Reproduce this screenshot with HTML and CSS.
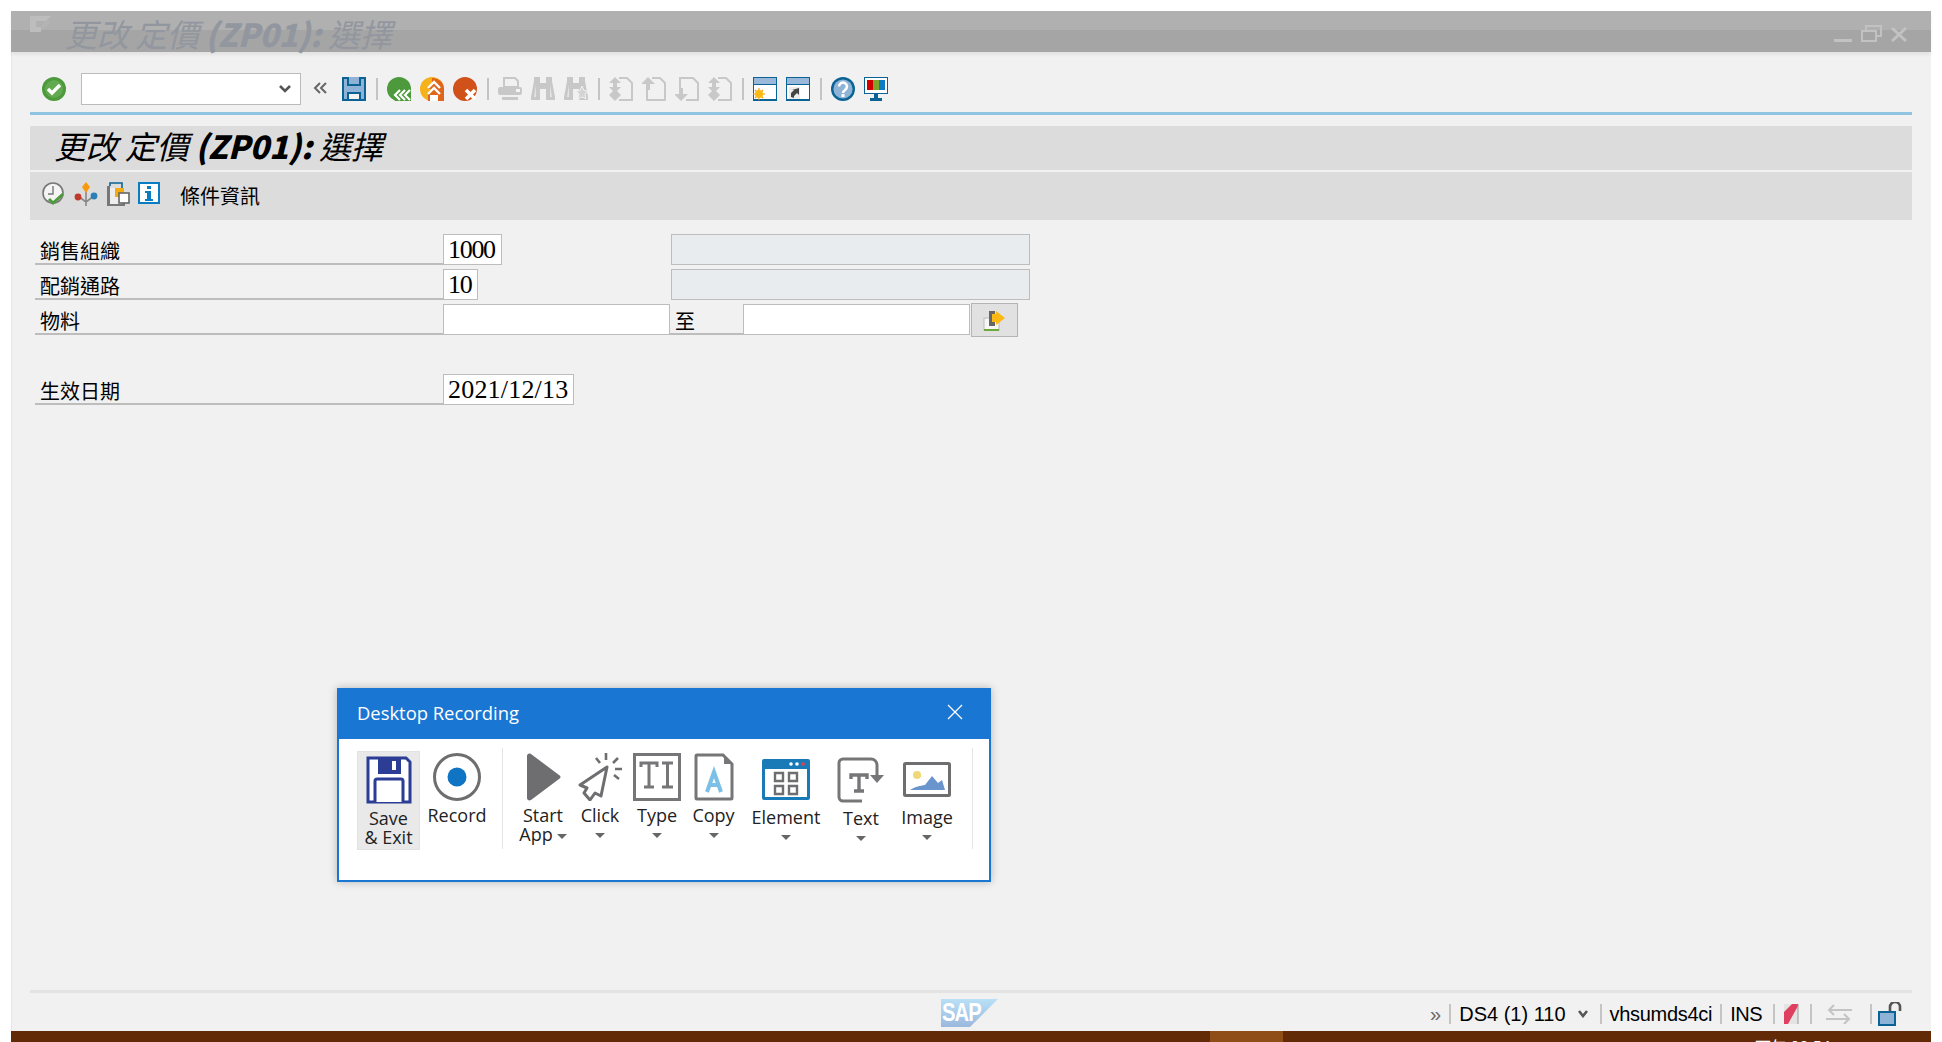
FILE: index.html
```html
<!DOCTYPE html>
<html>
<head>
  <title>更改 定價 (ZP01): 選擇</title>
  <link rel="stylesheet" href="styles.css">
</head>
<body>
  <div class="window">
    <div class="titlebar">
      <svg class="title-icon" width="22" height="16" viewBox="0 0 22 16"><path d="M0 0h21l-5 5H6v6h5v5H0z" fill="#bdbdbd"/><path d="M12 9l4-4h5l-9 9z" fill="#b4b4b4"/></svg>
      <span class="title-text">更改 定價 <b>(ZP01):</b> 選擇</span>
      <div class="win-controls">
        <svg width="18" height="4" viewBox="0 0 18 4"><rect width="18" height="3" y="1" fill="#c2c2c2"/></svg>
        <svg width="21" height="17" viewBox="0 0 21 17" fill="none" stroke="#c2c2c2" stroke-width="2"><rect x="1" y="6" width="14" height="10"/><path d="M5 5V1h15v10h-4"/></svg>
        <svg width="16" height="15" viewBox="0 0 16 15" fill="none" stroke="#c2c2c2" stroke-width="3"><path d="M1 1l14 13M15 1L1 14"/></svg>
      </div>
    </div>

    <div class="toolbar">
      <svg class="tb-icon" viewBox="0 0 24 24"><circle cx="12" cy="12" r="12" fill="#4c9a3c"/><circle cx="12" cy="12" r="9" fill="#62a94f"/><path d="M6 12l4 4 8-8" fill="none" stroke="#fff" stroke-width="3.4"/></svg>
      <div class="combo"><svg width="12" height="8" viewBox="0 0 12 8"><path d="M1 1l5 5 5-5" fill="none" stroke="#555" stroke-width="2.6"/></svg></div>
      <svg class="collapse" width="14" height="12" viewBox="0 0 14 12" fill="none" stroke="#666" stroke-width="2"><path d="M7 1L2 6l5 5M13 1L8 6l5 5"/></svg>
      <svg class="tb-icon" viewBox="0 0 24 24"><path d="M0 0h24v24H0z" fill="#0a6394"/><path d="M2 2h20v20H2z" fill="#8fb3d6"/><path d="M5 0h14v9H5z" fill="#0a6394"/><path d="M7 0h10v7H7z" fill="#8fb3d6"/><path d="M5 15h14v9H5z" fill="#0a6394"/><path d="M7 17h10v5H7z" fill="#f4f4f4"/></svg>
      <span class="tb-sep"></span>
      <svg class="tb-icon" viewBox="0 0 24 24"><circle cx="12" cy="12" r="12" fill="#4c9a3c"/><path d="M24 12v12H8l-2-6 4-6z" fill="#4c9a3c"/><path d="M13 13l-5 5 5 5M18 13l-5 5 5 5M23 13l-5 5 5 5" fill="none" stroke="#fff" stroke-width="2.2"/></svg>
      <svg class="tb-icon" viewBox="0 0 24 24"><circle cx="12" cy="12" r="12" fill="#f5b21a"/><path d="M12 1a11 11 0 0 1 12 11v12H12z" fill="#e0661c"/><path d="M13 4l7 8h-4l4 5v7H8v-7l4-5H8z" fill="#e0661c"/><path d="M8 11l6-6 6 6M8 17l6-6 6 6" fill="none" stroke="#fff" stroke-width="2.4"/><path d="M10 18h8v6h-8z" fill="#fff"/></svg>
      <svg class="tb-icon" viewBox="0 0 24 24"><circle cx="12" cy="12" r="12" fill="#d1511b"/><path d="M13 13l9 9M22 13l-9 9" stroke="#fff" stroke-width="3.6"/></svg>
      <span class="tb-sep"></span>
      <svg class="tb-icon" viewBox="0 0 24 24" fill="#c8c8c8"><path d="M6 1h11l3 3v6H6z" fill="none" stroke="#c8c8c8" stroke-width="2"/><rect y="10" width="24" height="8" rx="2"/><rect x="18" y="12" width="4" height="3" fill="#f4f4f4"/><rect x="4" y="20" width="16" height="3"/></svg>
      <svg class="tb-icon" viewBox="0 0 24 24" fill="#c8c8c8"><path d="M3 0h6v6h6V0h6v4l3 16v3h-9V12H9v11H0v-3L3 4z"/><path d="M3 20l2-12v12zM19 8l2 12h-2z" fill="#e4e4e4"/></svg>
      <svg class="tb-icon" viewBox="0 0 24 24" fill="#c8c8c8"><path d="M3 0h6v6h6V0h6v4l3 16v3h-9V12H9v11H0v-3L3 4z"/><path d="M3 20l2-12v12z" fill="#e4e4e4"/><path d="M18 9l2 4.500 4 .500-3 3 1 5-4-2-4 2 1-5-3-3 4-.500z" fill="#d4d4d4" stroke="#f1f1f1"/></svg>
      <span class="tb-sep"></span>
      <svg class="tb-icon" viewBox="0 0 24 24" fill="none" stroke="#c8c8c8" stroke-width="2"><path d="M10 1h8l5 5v17H10"/><path d="M6 0l6 6H8v4h4l-6 6-6-6h4V6H0zM6 12l6 6H8v0h4l-6 6-6-6h4v0H0z" fill="#c8c8c8" stroke="none"/></svg>
      <svg class="tb-icon" viewBox="0 0 24 24" fill="none" stroke="#c8c8c8" stroke-width="2"><path d="M10 1h8l5 5v17H5V13"/><path d="M6 0l7 7H8v6H4V7H-1z" fill="#c8c8c8" stroke="none"/></svg>
      <svg class="tb-icon" viewBox="0 0 24 24" fill="none" stroke="#c8c8c8" stroke-width="2"><path d="M5 11V1h13l5 5v17H11"/><path d="M6 24l7-7H8v-6H4v6H-1z" fill="#c8c8c8" stroke="none"/></svg>
      <svg class="tb-icon" viewBox="0 0 24 24" fill="none" stroke="#c8c8c8" stroke-width="2"><path d="M10 1h8l5 5v17H10"/><path d="M6 0l6 6H8v4h4l-6 6-6-6h4V6H0zM6 12l6 6H8v0h4l-6 6-6-6h4v0H0z" fill="#c8c8c8" stroke="none"/></svg>
      <span class="tb-sep"></span>
      <svg class="tb-icon" viewBox="0 0 24 24"><rect width="24" height="24" fill="#0a6394"/><rect x="1" y="1" width="22" height="6" fill="#9ab8da"/><rect x="1" y="8" width="22" height="14" fill="#fff"/><path d="M6 11v12M0 17h12M2 13l8 8M10 13l-8 8" stroke="#f79a0e" stroke-width="1.200"/><circle cx="6" cy="17" r="4" fill="#fcb813"/></svg>
      <svg class="tb-icon" viewBox="0 0 24 24"><rect width="24" height="24" fill="#0a6394"/><rect x="1" y="1" width="22" height="6" fill="#9ab8da"/><rect x="1" y="8" width="22" height="14" fill="#fff"/><rect x="3" y="10" width="11" height="12" fill="#ececec"/><path d="M5 20v-4l3-3H6l7-2v7l-2-2-3 3v2z" fill="#444"/></svg>
      <span class="tb-sep"></span>
      <svg class="tb-icon" viewBox="0 0 24 24"><circle cx="12" cy="12" r="12" fill="#0a6394"/><circle cx="12" cy="12" r="9.600" fill="#8fb3d6"/><path d="M8 9.500a4 4 0 1 1 6 3.500c-1.500 1-2 1.500-2 3" fill="none" stroke="#fff" stroke-width="2.600"/><rect x="10.500" y="17" width="3" height="3" fill="#fff"/></svg>
      <svg class="tb-icon" viewBox="0 0 24 24"><rect width="24" height="17" fill="#0a6394"/><rect x="1" y="1" width="22" height="15" fill="#fff"/><rect x="3" y="3" width="6" height="10" fill="#d00000"/><rect x="9" y="3" width="6" height="10" fill="#7ba428"/><rect x="15" y="3" width="6" height="10" fill="#0a7cc4"/><path d="M10 17h4v4h4v3H6v-3h4z" fill="#0a6394"/></svg>
    </div>

    <div class="rule"></div>

    <div class="screen-title">更改 定價 <b>(ZP01):</b> 選擇</div>

    <div class="app-toolbar">
      <svg class="tb-icon" viewBox="0 0 24 24"><circle cx="11" cy="11" r="10" fill="#f4f4f4" stroke="#777" stroke-width="1.600"/><path d="M11 4v8H6" fill="none" stroke="#777" stroke-width="1.400"/><path d="M7 17l4 4 10-9" fill="none" stroke="#4c9a3c" stroke-width="3"/></svg>
      <svg class="tb-icon" viewBox="0 0 24 24"><path d="M12 8v16M4 14l8 6 8-6" fill="none" stroke="#888" stroke-width="1.600"/><path d="M12 0l4 5-4 6-4-6z" fill="#f79a0e"/><circle cx="4" cy="15" r="3.400" fill="#c0392b"/><circle cx="20" cy="14" r="3.400" fill="#2a7fb8"/></svg>
      <svg class="tb-icon" viewBox="0 0 24 24"><path d="M4 4V1h12v5" fill="none" stroke="#0a6394" stroke-width="1.600"/><path d="M1 4h3v18h13v-5h2v7H1z" fill="#777"/><rect x="4" y="6" width="12" height="16" fill="#eee"/><rect x="9" y="6" width="9" height="9" fill="#f5ac12"/><rect x="13" y="11" width="10" height="10" fill="#fff" stroke="#666" stroke-width="1.600"/></svg>
      <svg class="info-icon" viewBox="0 0 22 22"><rect x="1" y="1" width="20" height="20" fill="#fff" stroke="#0a7cc4" stroke-width="2"/><rect x="9" y="4" width="4" height="3" fill="#0a7cc4"/><path d="M7 9h6v8h2v2H7v-2h2v-6H7z" fill="#0a7cc4"/></svg>
      <span class="app-label">條件資訊</span>
    </div>

    <form class="form">
      <div class="row">
        <label class="field-label">銷售組織</label>
        <div class="input w-org">1000</div>
        <div class="gap-org"></div>
        <div class="input readonly"></div>
      </div>
      <div class="row">
        <label class="field-label">配銷通路</label>
        <div class="input w-chan">10</div>
        <div class="gap-chan"></div>
        <div class="input readonly"></div>
      </div>
      <div class="row">
        <label class="field-label">物料</label>
        <div class="input w-mat"></div>
        <label class="to-label">至</label>
        <div class="input w-mat"></div>
        <button type="button" class="range-btn">
          <svg width="23" height="21" viewBox="0 0 23 21"><rect x="1" y="8" width="15" height="12" fill="#f6f6f6" stroke="#bbb"/><path d="M1 20h15" stroke="#6fa83a" stroke-width="2"/><path d="M6 1h6v15H6z" fill="#666"/><path d="M13 1l9 7-9 7v-3H9V4h4z" fill="#fcb813"/></svg>
        </button>
      </div>
      <div class="row"></div>
      <div class="row">
        <label class="field-label">生效日期</label>
        <div class="input w-date">2021/12/13</div>
      </div>
    </form>

    <footer class="statusbar">
      <svg class="sap-logo" width="57" height="34" viewBox="0 -3 57 34">
        <defs><linearGradient id="sapfill" x1="0" y1="0" x2="0" y2="1"><stop offset="0" stop-color="#b9e0f7"/><stop offset="1" stop-color="#9bb8dd"/></linearGradient></defs>
        <polygon points="0,0 57,0 29,28 0,28" fill="url(#sapfill)"/>
        <text x="1" y="18" transform="scale(.92 1.200)" class="sap-text">SAP</text>
      </svg>
      <div class="status-items">
        <span class="status-more">»</span><span class="s-sep"></span>
        <span class="status-sys">DS4 (1) 110</span>
        <svg class="status-chev" width="10" height="8" viewBox="0 0 10 8"><path d="M1 1l4 5 4-5" fill="none" stroke="#555" stroke-width="2.600"/></svg>
        <span class="s-sep"></span>
        <span class="status-host">vhsumds4ci</span><span class="s-sep"></span>
        <span class="status-ins">INS</span><span class="s-sep"></span>
        <svg width="18" height="20" viewBox="0 0 18 20"><rect x="1" y="0" width="14" height="20" fill="#e4e4e4"/><path d="M1 20V8l8-8h6v2L5 20z" fill="#e0405f"/><path d="M15 0v20" stroke="#999"/></svg>
        <span class="s-sep status-gap"></span>
        <svg class="arrows" width="26" height="20" viewBox="0 0 26 20" fill="none" stroke="#c4c4c4" stroke-width="2"><path d="M26 6H3M8 1L3 6l5 5M0 15h23M18 10l5 5-5 5"/></svg>
        <span class="s-sep"></span>
        <svg class="status-lock" width="24" height="24" viewBox="0 0 24 24"><path d="M12 9V5a5 5 0 0 1 10 0v4" fill="none" stroke="#555" stroke-width="2.600"/><rect x="1" y="10" width="16" height="13" fill="#8fb3d6" stroke="#0a6394" stroke-width="2"/></svg>
      </div>
    </footer>
  </div>

  <div class="taskbar">
    <span class="task-active"></span>
    <span class="clock">下午 08:54</span>
  </div>

  <div class="dialog">
    <div class="dialog-head">
      <span class="dialog-title">Desktop Recording</span>
      <svg width="16" height="16" viewBox="0 0 16 16"><path d="M1 1l14 14M15 1L1 15" stroke="#fff" stroke-width="1.300"/></svg>
    </div>
    <div class="dialog-body">
      <div class="tool tool-save">
        <svg width="46" height="48" viewBox="0 0 46 48"><path d="M2 2h38l4 4v40H2z" fill="#fff" stroke="#2b3d94" stroke-width="3"/><path d="M12 2h23v16H12z" fill="#2b3d94"/><rect x="26" y="5" width="4" height="9" fill="#fff"/><path d="M9 46V25a2 2 0 0 1 2-2h24a2 2 0 0 1 2 2v21" fill="#fff" stroke="#2b3d94" stroke-width="3"/></svg>
        <span class="tool-name">Save<br>&amp; Exit</span>
      </div>
      <div class="tool tool-record">
        <svg width="48" height="48" viewBox="0 0 48 48"><circle cx="24" cy="24" r="22.500" fill="none" stroke="#6e6e70" stroke-width="3"/><circle cx="24" cy="24" r="9.500" fill="#0f74c4"/></svg>
        <span class="tool-name">Record</span>
      </div>
      <span class="dialog-sep"></span>
      <div class="tool tool-start">
        <svg width="36" height="48" viewBox="0 0 36 48"><path d="M2 3c0-2 2-3 4-2l28 21c2 1 2 3 0 4L6 47c-2 1-4 0-4-2z" fill="#6e6e70"/></svg>
        <span class="tool-name">Start<br>App<i class="caret caret-inline"></i></span>
      </div>
      <div class="tool tool-click">
        <svg width="44" height="48" viewBox="0 0 44 48"><path d="M29 14L2 32l7 3-3 5 6 7 5-7 6 3z" fill="#fff" stroke="#6e6e70" stroke-width="3" stroke-linejoin="round"/><path d="M28 0v7M18 5l4 5M40 5l-5 5M44 16h-7M41 26l-5-4" stroke="#6e6e70" stroke-width="2.600"/></svg>
        <span class="tool-name">Click</span>
        <i class="caret"></i>
      </div>
      <div class="tool tool-type">
        <svg width="48" height="48" viewBox="0 0 48 48"><rect x="1.500" y="1.500" width="45" height="45" fill="#fff" stroke="#767678" stroke-width="3"/><path d="M8 14v-4h16v4M16 10v24M11 34h10M29 10h11M34.500 10v24M29 34h11" fill="none" stroke="#767678" stroke-width="3"/></svg>
        <span class="tool-name">Type</span>
        <i class="caret"></i>
      </div>
      <div class="tool tool-copy">
        <svg width="40" height="48" viewBox="0 0 40 48"><path d="M2 3a1 1 0 0 1 1-1h26l9 9v34a1 1 0 0 1-1 1H3a1 1 0 0 1-1-1z" fill="#fff" stroke="#767678" stroke-width="3"/><path d="M30 2v9h8" fill="#767678"/><path d="M13 39l7-20 7 20M15 32h10" fill="none" stroke="#7cc0e8" stroke-width="4"/></svg>
        <span class="tool-name">Copy</span>
        <i class="caret"></i>
      </div>
      <div class="tool tool-element">
        <svg width="48" height="41" viewBox="0 0 48 41"><rect width="48" height="41" rx="2" fill="#1a7ab8"/><rect x="3" y="10" width="42" height="28" fill="#fff"/><circle cx="29" cy="5" r="1.800" fill="#fff"/><circle cx="35" cy="5" r="1.800" fill="#fff"/><circle cx="41" cy="5" r="1.800" fill="#e8404a"/><path d="M13 14h8v8h-8zM27 14h8v8h-8zM13 27h8v8h-8zM27 27h8v8h-8z" fill="none" stroke="#6e6e70" stroke-width="2.400"/></svg>
        <span class="tool-name">Element</span>
        <i class="caret"></i>
      </div>
      <div class="tool tool-text">
        <svg width="48" height="46" viewBox="0 0 48 46"><path d="M25 44H6a4 4 0 0 1-4-4V6a4 4 0 0 1 4-4h28a6 6 0 0 1 6 6v12" fill="none" stroke="#767678" stroke-width="3"/><path d="M33 18h14l-7 8z" fill="#767678"/><path d="M14 22v-4h16v4M22 18v16M17 34h10" fill="none" stroke="#767678" stroke-width="3.400"/></svg>
        <span class="tool-name">Text</span>
        <i class="caret"></i>
      </div>
      <div class="tool tool-image">
        <svg width="48" height="35" viewBox="0 0 48 35"><rect x="1.500" y="1.500" width="45" height="32" rx="1" fill="#fff" stroke="#6e6e70" stroke-width="3"/><circle cx="14" cy="13" r="4" fill="#f0d878"/><path d="M7 28c6-4 10-4 15-5l7-9 6 7 4-3 3 10z" fill="#6a94cc"/></svg>
        <span class="tool-name">Image</span>
        <i class="caret"></i>
      </div>
      <span class="dialog-sep dialog-sep-end"></span>
    </div>
  </div>
</body>
</html>
```

FILE: styles.css
```css
html, body {
  margin: 0;
  height: 1042px;
  overflow: hidden;
  background: #fff;
}
body {
  position: relative;
  font-family: "Noto Sans CJK TC", "Liberation Sans", sans-serif;
  color: #000;
}
b {
  font-weight: 900;
}

/* SAP window */
.window {
  margin: 11px 11px 0 11px;
  height: 1020px;
  background: #f1f1f1;
  box-shadow: inset 1px 0 0 #e6e6e6;
  display: flex;
  flex-direction: column;
  box-sizing: border-box;
}
.titlebar {
  height: 41px;
  flex: none;
  background: linear-gradient(#b0b0b0 0, #b0b0b0 19px, #a5a5a5 19px, #a5a5a5 100%);
  box-shadow: 0 3px 3px rgba(0, 0, 0, 0.06);
  display: flex;
  align-items: center;
  padding: 0 24px 0 19px;
}
.title-icon {
  margin-top: -15px;
}
.title-text {
  margin-left: 13px;
  margin-top: 4px;
  font-size: 32px;
  font-style: italic;
  letter-spacing: -0.300px;
  color: #92979f;
  white-space: nowrap;
  line-height: 41px;
}
.win-controls {
  margin-left: auto;
  margin-top: 3px;
  display: flex;
  align-items: flex-end;
  gap: 9px;
}

.toolbar {
  height: 60px;
  flex: none;
  margin-left: 31px;
  padding-top: 13px;
  box-sizing: border-box;
  display: flex;
  align-items: center;
  gap: 9px;
}
.tb-icon {
  width: 24px;
  height: 24px;
  flex: none;
}
.combo {
  width: 220px;
  height: 32px;
  margin-left: 6px;
  background: #fff;
  border: 1px solid #bbb;
  box-sizing: border-box;
  display: flex;
  align-items: center;
  justify-content: flex-end;
  padding-right: 9px;
}
.collapse {
  flex: none;
  margin: 0 6px 2px 3px;
}
.tb-sep {
  width: 2px;
  height: 22px;
  margin-left: 1px;
  background: #c4c4c4;
  flex: none;
}
.rule {
  height: 3px;
  flex: none;
  margin: 0 19px;
  background: #91c4e0;
}
.screen-title {
  height: 44px;
  flex: none;
  margin: 11px 19px 0 19px;
  padding-left: 24px;
  background: #dcdcdc;
  font-size: 32px;
  line-height: 39px;
  font-style: italic;
  letter-spacing: -0.150px;
  white-space: nowrap;
}
.app-toolbar {
  height: 48px;
  flex: none;
  margin: 2px 19px 0 19px;
  padding: 10px 0 0 12px;
  background: #dcdcdc;
  display: flex;
  align-items: flex-start;
  gap: 8px;
  box-sizing: border-box;
}
.info-icon {
  width: 22px;
  height: 22px;
}
.app-label {
  margin-left: 12px;
  font-size: 20px;
  line-height: 28px;
}

/* selection form */
.form {
  margin: 14px 0 0 24px;
  display: flex;
  flex-direction: column;
  gap: 4px;
}
.row {
  display: flex;
  height: 31px;
}
.field-label {
  width: 408px;
  box-sizing: border-box;
  padding: 2px 0 0 5px;
  border-bottom: 2px solid #bdbdbd;
  font-size: 20px;
  line-height: 30px;
}
.input {
  box-sizing: border-box;
  background: #fff;
  border: 1px solid #bdbdbd;
  font-family: "Liberation Serif", serif;
  font-size: 26px;
  line-height: 29px;
  padding-left: 4px;
  letter-spacing: -1.300px;
}
.w-org {
  width: 59px;
}
.gap-org {
  width: 170px;
}
.w-chan {
  width: 35px;
}
.gap-chan {
  width: 194px;
}
.readonly {
  width: 359px;
  margin-left: -1px;
  background: #e9ecef;
}
.w-mat {
  width: 227px;
}
.to-label {
  width: 73px;
  box-sizing: border-box;
  padding: 2px 0 0 5px;
  border-bottom: 2px solid #bdbdbd;
  font-size: 20px;
  line-height: 30px;
}
.w-date {
  width: 131px;
  letter-spacing: 0.200px;
}
.range-btn {
  width: 47px;
  height: 34px;
  margin: -1px 0 0 1px;
  padding: 0;
  background: #e1e1e1;
  border: 1px solid #b4b4b4;
  display: flex;
  align-items: center;
  justify-content: center;
}

/* status bar */
.statusbar {
  margin: auto 19px 0 19px;
  height: 41px;
  flex: none;
  box-sizing: border-box;
  border-top: 3px solid #e3e3e3;
  display: flex;
  align-items: center;
  padding: 0 10px 0 911px;
}
.sap-logo {
  margin-top: 2px;
  flex: none;
}
.sap-text {
  font-family: "Liberation Sans", sans-serif;
  font-size: 22px;
  font-weight: bold;
  letter-spacing: -1px;
  fill: #fff;
}
.status-items {
  margin-left: auto;
  margin-top: 3px;
  display: flex;
  align-items: center;
  gap: 8px;
  font-family: "Liberation Sans", sans-serif;
  font-size: 20px;
  line-height: 24px;
}
.status-more {
  color: #666;
}
.status-sys {
  margin-right: 4px;
}
.status-chev {
  margin-right: 4px;
}
.status-host {
  letter-spacing: -0.300px;
}
.status-ins {
  letter-spacing: -0.500px;
  margin-right: 3px;
}
.s-sep {
  width: 2px;
  height: 20px;
  background: #c4c4c4;
}
.status-gap {
  margin-left: 1px;
}
.arrows {
  margin: 0 10px 0 6px;
}
.status-lock {
  margin-left: -2px;
}

.taskbar {
  height: 11px;
  margin: 0 11px;
  background: #632a08;
  position: relative;
  overflow: hidden;
}
.task-active {
  display: block;
  position: absolute;
  left: 1199px;
  top: 0;
  width: 73px;
  height: 11px;
  background: #8f4d18;
}
.clock {
  position: absolute;
  left: 1744px;
  top: 5px;
  font-size: 16px;
  line-height: 20px;
  color: #fff;
  white-space: nowrap;
}

/* floating recorder window */
.dialog {
  position: absolute;
  left: 337px;
  top: 688px;
  width: 654px;
  height: 194px;
  box-sizing: border-box;
  background: #fff;
  border: 2px solid #1976d2;
  box-shadow: 0 0 8px rgba(0, 0, 0, 0.25);
  font-family: "Open Sans", "Noto Sans", sans-serif;
}
.dialog-head {
  height: 49px;
  background: #1976d2;
  color: #fff;
  display: flex;
  align-items: center;
  justify-content: space-between;
  padding: 0 26px 5px 18px;
  box-sizing: border-box;
}
.dialog-title {
  font-size: 18.400px;
}
.dialog-body {
  display: flex;
  align-items: flex-start;
  padding: 12px 0 0 18px;
}
.tool {
  display: flex;
  flex-direction: column;
  align-items: center;
  flex: none;
  font-size: 18px;
  line-height: 19px;
  color: #222;
  text-align: center;
}
.tool svg {
  flex: none;
}
.tool-name {
  white-space: nowrap;
  margin-top: 5px;
}
.tool-save {
  width: 63px;
  height: 99px;
  padding-top: 4px;
  box-sizing: border-box;
  background: #e9e9e9;
  border: 1px solid #e2e2e2;
}
.tool-record {
  width: 74px;
  margin-right: 8px;
  margin-top: 2px;
}
.tool-start {
  width: 54px;
  margin-left: 13px;
  margin-top: 2px;
}
.tool-click {
  width: 60px;
  margin-top: 2px;
}
.tool-type {
  width: 54px;
  margin-top: 2px;
}
.tool-copy {
  width: 59px;
  margin-top: 2px;
}
.tool-element {
  width: 86px;
  margin-top: 8px;
}
.tool-element .tool-name {
  margin-top: 8px;
}
.tool-text {
  width: 64px;
  margin-top: 6px;
}
.tool-text .tool-name {
  margin-top: 6px;
}
.tool-image {
  width: 68px;
  margin-top: 11px;
}
.tool-image .tool-name {
  margin-top: 11px;
}
.caret {
  display: block;
  width: 0;
  height: 0;
  margin-top: 8px;
  border-left: 5px solid transparent;
  border-right: 5px solid transparent;
  border-top: 5px solid #666;
}
.caret-inline {
  display: inline-block;
  margin: 0 0 2px 4px;
}
.dialog-sep {
  width: 1px;
  height: 101px;
  margin-top: -3px;
  background: #e4e4e4;
  flex: none;
}
.dialog-sep-end {
  margin-left: 11px;
}
```
